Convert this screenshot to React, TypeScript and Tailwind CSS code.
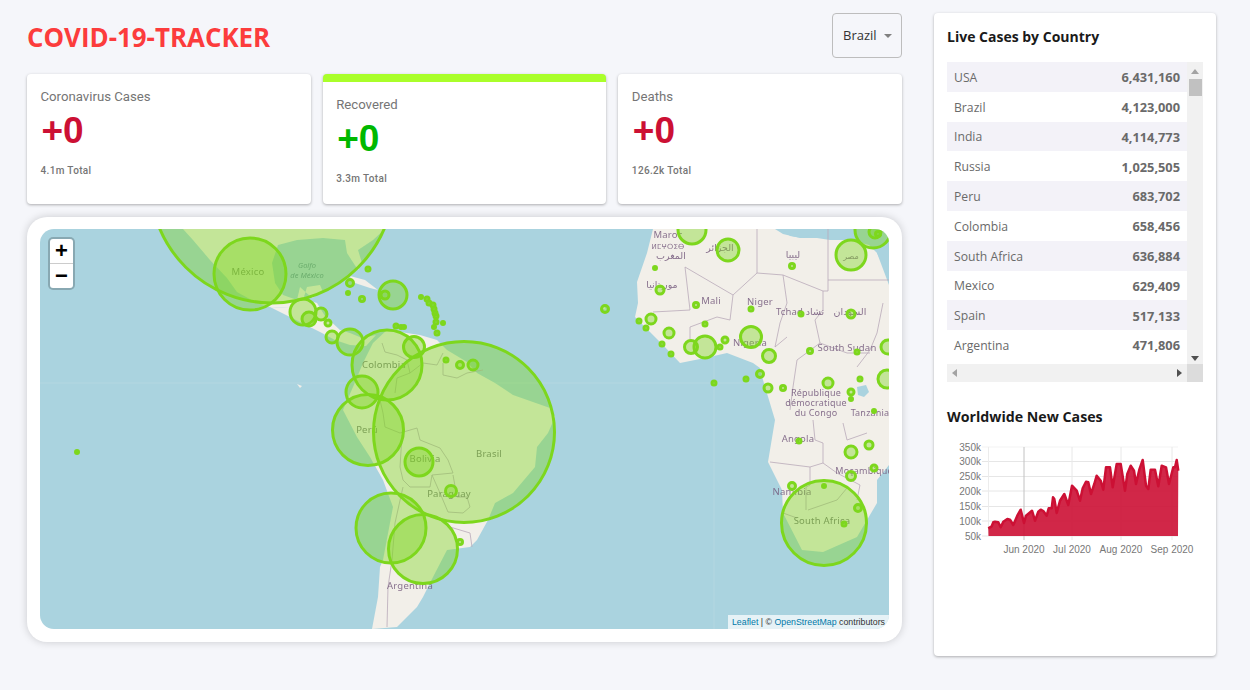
const countries = [
  ["USA", "6,431,160"],
  ["Brazil", "4,123,000"],
  ["India", "4,114,773"],
  ["Russia", "1,025,505"],
  ["Peru", "683,702"],
  ["Colombia", "658,456"],
  ["South Africa", "636,884"],
  ["Mexico", "629,409"],
  ["Spain", "517,133"],
  ["Argentina", "471,806"],
];

// x, y, r in page pixels; the svg viewBox below uses the same numbers
const bubbles: [number, number, number][] = [
  [272, 181, 122], [250, 274, 36], [368, 269, 2], [350, 283, 3.5], [348, 293, 1.5], [362, 299, 2.5],
  [393, 295, 14], [385, 295, 4], [421, 297, 1.5], [427, 299, 2], [429, 303, 2], [433, 305, 2],
  [434, 309, 2], [435, 313, 2], [436, 316, 2], [436, 322, 2], [443, 323, 1.5], [434, 327, 1.5],
  [437, 333, 2], [396, 326, 2], [401, 327, 1.5], [404, 327, 1.5], [303, 312, 13], [309, 319, 7],
  [321, 314, 6], [328, 323, 3], [332, 337, 6], [350, 342, 13], [387, 365, 35], [414, 347, 10.5],
  [446, 360, 2], [460, 365, 3.5], [473, 365, 5], [362, 392, 16], [368, 430, 35.5], [464, 432, 90.5],
  [419, 462, 14], [451, 491, 5.5], [391, 528, 35], [423, 549, 34.5], [460, 542, 2.5], [77, 452, 1.5],
  [605, 309, 3.5], [692, 230, 14], [728, 250, 11], [792, 266, 2.5], [851, 255, 15], [873, 230, 18],
  [878, 234, 2.5], [875, 232, 6], [655, 268, 1.5], [660, 290, 4], [696, 305, 2.5], [751, 309, 2],
  [801, 314, 2], [851, 314, 4], [651, 319, 5], [639, 321, 2], [646, 328, 2], [669, 333, 5],
  [705, 324, 2], [662, 344, 2], [671, 354, 2], [691, 347, 6.5], [705, 347, 11], [725, 340, 3],
  [720, 347, 2], [751, 337, 10.5], [769, 356, 6.5], [810, 351, 2.5], [857, 352, 2], [888, 347, 7],
  [760, 374, 3.5], [746, 379, 2], [714, 383, 2], [768, 388, 4], [783, 388, 2.5], [828, 383, 5],
  [851, 392, 3], [851, 399, 1.5], [860, 379, 2], [887, 379, 9], [874, 411, 1.5], [799, 441, 2],
  [851, 452, 6], [869, 445, 4], [874, 468, 3], [851, 476, 4.5], [792, 486, 3.5], [824, 486, 1.5],
  [858, 508, 3.5], [844, 524, 2], [824, 523, 42.5],
];

const land = [
  // usa and mexico
  "M183 229 L193 240 L210 260 L227 278 L237 292 L257 303 L270 307 L290 308 L297 302 L303 300 L307 287 L320 285 L323 292 L312 298 L300 287 L297 300 L283 295 L275 283 L272 263 L278 245 L297 240 L323 238 L345 240 L347 253 L358 270 L362 263 L358 250 L373 240 L385 229 Z",
  // central america
  "M270 307 L300 322 L320 332 L335 340 L350 345 L366 346 L376 335 L362 338 L350 333 L340 330 L325 316 L317 303 L303 299 L297 302 L290 308 Z",
  // south america
  "M387 330 L420 335 L437 340 L447 350 L467 362 L477 373 L495 383 L513 395 L550 408 L555 417 L548 433 L537 447 L535 467 L513 493 L495 503 L488 520 L477 540 L470 547 L447 550 L433 577 L423 597 L417 607 L397 627 L372 629 L378 597 L380 567 L383 560 L393 507 L383 480 L370 457 L357 437 L343 410 L353 387 L363 363 L373 343 Z",
  // africa
  "M653 229 L647 253 L637 282 L638 303 L635 317 L650 332 L663 345 L680 363 L705 358 L727 353 L753 363 L760 368 L763 380 L775 420 L768 462 L782 490 L783 513 L802 550 L823 552 L857 537 L877 503 L877 480 L889 465 L889 285 L877 253 L869 245 L850 240 L830 240 L817 238 L800 238 L783 234 L775 229 Z",
  // islands
  "M350 276 L365 280 L378 290 L370 288 L352 282 Z",
  "M297 384 L302 386 L300 388 Z",
  "M600 308 L604 305 L606 310 Z",
];

const borders = [
  "M382 343 L385 352 L397 355 L407 360 L410 373 L397 378 L395 393",
  "M410 373 L423 363 L437 365 L443 353",
  "M443 363 L443 375 L457 378 L467 373 L483 370",
  "M380 400 L383 413 L385 427 L400 433 L417 428",
  "M417 428 L420 440 L440 448 L448 460 L453 473 L432 475 L430 487 L410 487 L403 480 L400 467 L402 435",
  "M432 475 L440 493 L448 512 L463 513 L470 507 L467 497 L457 497 L453 475",
  "M403 487 L395 523 L392 560 L388 587 L387 627",
  "M450 527 L470 533 L472 547",
  "M685 267 L733 295 L757 273 L757 229",
  "M685 267 L690 310 L653 312",
  "M757 273 L783 275 L823 291 L828 291 L828 229",
  "M733 295 L730 320 L717 317 L690 327 L690 342",
  "M783 275 L787 303 L780 323 L775 347 L787 337",
  "M823 291 L823 310 L815 320 L820 343 L797 360 L793 387 L790 410",
  "M828 280 L889 280",
  "M883 303 L877 333 L870 350 L857 367",
  "M820 343 L847 353 L870 353",
  "M770 462 L810 467 L810 485 L806 487 L806 510",
  "M808 510 L837 500 L847 488",
  "M813 420 L815 440 L823 443 L823 463 L810 467",
  "M823 463 L837 473 L860 485 L857 500",
  "M843 423 L847 440 L867 433",
  "M783 513 L797 518",
];

const arrowUp = "M0 5 L4 0 L8 5 Z";

const chartPoints: [number, number][] = [
  [175, 388], [185, 382], [190, 370], [195, 368], [205, 370], [212, 385], [220, 368], [232, 360], [240, 362],
  [250, 378], [262, 350], [272, 332], [282, 372], [288, 350], [298, 342], [306, 335], [315, 365], [325, 338],
  [332, 332], [340, 336], [350, 350], [356, 328], [365, 328], [369, 295], [373, 300], [380, 342], [390, 305],
  [403, 285], [415, 318], [426, 260], [440, 275], [450, 305], [458, 268], [468, 248], [475, 250], [483, 285],
  [493, 255], [500, 230], [512, 245], [520, 272], [528, 205], [540, 205], [548, 265], [560, 195], [572, 195],
  [585, 275], [592, 225], [602, 200], [612, 215], [618, 255], [628, 212], [638, 183], [648, 260], [655, 270],
  [662, 212], [675, 212], [685, 262], [695, 200], [708, 205], [717, 255], [730, 205], [735, 205], [740, 183],
  [745, 215],
];
const chartLine = chartPoints.map(([x, y]) => `${(x / 3 + 930).toFixed(1)} ${(y / 3 + 400).toFixed(1)}`).join(" L");

function StatCard({ title, value, total, color, active }: { title: string; value: string; total: string; color: string; active?: boolean }) {
  return (
    <div className={`flex-1 h-[130px] rounded bg-white shadow-[0_1px_3px_rgba(0,0,0,0.3)] px-[13.5px] pt-[15px] overflow-hidden ${active ? "border-t-[8px] border-[#aaff2a]" : ""}`}>
      <p className="font-['Roboto',sans-serif] text-[13.2px] leading-[16px] text-[#757575]">{title}</p>
      <p className={`mt-[4px] ml-[1px] font-['Liberation_Sans',sans-serif] text-[37px] leading-[44px] font-bold ${color}`}>{value}</p>
      <p className="mt-[11px] font-['Roboto',sans-serif] text-[10px] leading-[14px] font-medium text-[#757575] tracking-[0.35px]">{total}</p>
    </div>
  );
}

function CountryTable() {
  return (
    <div className="mt-[14px] h-[320px] grid grid-cols-[240px_16px] grid-rows-[302px_18px] bg-[#f1f1f1]">
      <div className="bg-white">
        {countries.map(([name, cases], i) => (
          <div key={name} className={`flex items-center justify-between h-[29.8px] pt-[2px] px-[7px] text-[#6a6a6a] ${i % 2 === 0 ? "bg-[#f3f2f8]" : "bg-white"}`}>
            <span className="text-[12.2px]">{name}</span>
            <span className="text-[12.8px] font-bold">{cases}</span>
          </div>
        ))}
      </div>
      <div className="flex flex-col items-center bg-[#f1f1f1]">
        <svg viewBox="0 0 8 5" className="mt-[7px] w-2 h-[5px] fill-[#a3a3a3]"><path d={arrowUp} /></svg>
        <div className="mt-[5px] w-[13px] h-[17px] bg-[#c1c1c1]" />
        <svg viewBox="0 0 8 5" className="mt-auto mb-[3px] w-2 h-[5px] fill-[#505050] rotate-180"><path d={arrowUp} /></svg>
      </div>
      <div className="flex items-center justify-between px-[5px] bg-[#f1f1f1]">
        <svg viewBox="0 0 5 8" className="w-[5px] h-2 fill-[#a3a3a3]"><path d="M0 4 L5 0 L5 8 Z" /></svg>
        <svg viewBox="0 0 5 8" className="w-[5px] h-2 fill-[#505050]"><path d="M5 4 L0 0 L0 8 Z" /></svg>
      </div>
      <div className="bg-[#dcdcdc]" />
    </div>
  );
}

function CasesChart() {
  const ticks = [
    ["350k", 448], ["300k", 462.5], ["250k", 477.5], ["200k", 492], ["150k", 507.5], ["100k", 522], ["50k", 537],
  ] as const;
  const months = [
    ["Jun 2020", 1024, "#c2c2c2"], ["Jul 2020", 1072, "#e8e8e8"], ["Aug 2020", 1121, "#e8e8e8"], ["Sep 2020", 1172, "#e8e8e8"],
  ] as const;
  return (
    <svg viewBox="947 440 256 120" className="mt-[11px] block w-[256px] h-[120px] font-['Liberation_Sans',sans-serif]">
      {ticks.map(([label, y], i) => (
        <g key={label}>
          <line x1="982" x2="1178" y1={y} y2={y} stroke={i === 0 ? "#f3f3f3" : "#e6e6e6"} />
          <text x="981" y={y + 3.5} textAnchor="end" fontSize="10" fill="#777">{label}</text>
        </g>
      ))}
      <line x1="988.5" x2="988.5" y1="448" y2="537" stroke="#ececec" />
      {months.map(([label, x, stroke]) => (
        <g key={label}>
          <line x1={x} x2={x} y1="448" y2="541" stroke={stroke} />
          <text x={x} y="554" textAnchor="middle" fontSize="10" fill="#777">{label}</text>
        </g>
      ))}
      <path d={`M988.5 537 L${chartLine} L1178 537 Z`} fill="#cc1034" fillOpacity="0.9" />
      <path d={`M${chartLine}`} fill="none" stroke="#cc1034" strokeWidth="2.5" strokeLinejoin="round" />
    </svg>
  );
}

function MapLabel({ x, y, children, purple, size = 9.5 }: { x: number; y: number; children: string; purple?: boolean; size?: number }) {
  return (
    <text x={x} y={y} textAnchor="middle" fontSize={size} fill={purple ? "#74597c" : "#666"} fillOpacity="0.85" letterSpacing="0.2">
      {children}
    </text>
  );
}

function WorldMap() {
  return (
    <div className="relative h-[400px] rounded-[14px] overflow-hidden bg-[#aad3df]">
      <svg viewBox="40 229 849 400" className="block w-[849px] h-[400px] blur-[0.35px] font-['Noto_Sans','DejaVu_Sans',sans-serif]">
        <line x1="40" x2="889" y1="383" y2="383" stroke="#fff" strokeOpacity="0.12" />
        <line x1="714" x2="714" y1="229" y2="629" stroke="#fff" strokeOpacity="0.12" />
        {land.map((d) => (
          <path key={d} d={d} fill="#f2efe9" />
        ))}
        <path d="M857 387 L866 385 L869 392 L864 397 L858 395 Z" fill="#aad3df" />
        <path d="M877 253 L885 270 L889 280 L889 262 L882 253 Z" fill="#aad3df" />
        <path d="M783 229 L790 236 L803 238 L812 234 L817 229 Z" fill="#aad3df" />
        <path d="M377 329 L381 333 L379 337 L376 334 Z" fill="#aad3df" />
        {borders.map((d) => (
          <path key={d} d={d} fill="none" stroke="#b9a9b9" strokeWidth="0.8" />
        ))}
        <MapLabel x={248} y={275}>México</MapLabel>
        <text x={307} y={268} textAnchor="middle" fontSize="7.5" fontStyle="italic" fill="#5f8fa0">Golfo</text>
        <text x={307} y={278} textAnchor="middle" fontSize="7.5" fontStyle="italic" fill="#5f8fa0">de México</text>
        <MapLabel x={384} y={368}>Colombia</MapLabel>
        <MapLabel x={367} y={433}>Perú</MapLabel>
        <MapLabel x={489} y={457}>Brasil</MapLabel>
        <MapLabel x={425} y={462}>Bolivia</MapLabel>
        <MapLabel x={449} y={497}>Paraguay</MapLabel>
        <MapLabel x={410} y={589} purple>Argentina</MapLabel>
        <MapLabel x={668} y={238} purple>Maroc</MapLabel>
        <MapLabel x={668} y={249} size={7} purple>ⵍⵎⵖⵔⵉⴱ</MapLabel>
        <MapLabel x={671} y={259} purple>المغرب</MapLabel>
        <MapLabel x={720} y={251} purple>الجزائر</MapLabel>
        <MapLabel x={793} y={258} purple>ليبيا</MapLabel>
        <MapLabel x={851} y={259} size={8} purple>مصر</MapLabel>
        <MapLabel x={662} y={288} purple>موريتانيا</MapLabel>
        <MapLabel x={711} y={304} purple>Mali</MapLabel>
        <MapLabel x={760} y={305} purple>Niger</MapLabel>
        <MapLabel x={800} y={315} purple>Tchad تشاد</MapLabel>
        <MapLabel x={850} y={315} purple>السودان</MapLabel>
        <MapLabel x={750} y={346} purple>Nigeria</MapLabel>
        <MapLabel x={847} y={351} purple>South Sudan</MapLabel>
        <MapLabel x={816} y={396} size={9} purple>République</MapLabel>
        <MapLabel x={816} y={406} size={9} purple>démocratique</MapLabel>
        <MapLabel x={816} y={416} size={9} purple>du Congo</MapLabel>
        <MapLabel x={870} y={416} size={9} purple>Tanzania</MapLabel>
        <MapLabel x={798} y={442} purple>Angola</MapLabel>
        <MapLabel x={864} y={474} size={9} purple>Moçambique</MapLabel>
        <MapLabel x={792} y={495} purple>Namibia</MapLabel>
        <MapLabel x={822} y={524}>South Africa</MapLabel>
        {bubbles.map(([x, y, r]) => (
          <circle key={`${x}-${y}-${r}`} cx={x} cy={y} r={r} fill="#7dd71d" fillOpacity="0.4" stroke="#7dd71d" strokeWidth="3" />
        ))}
      </svg>

      <div className="absolute left-[10px] top-[10px] w-[23px] rounded-[3px] shadow-[0_0_0_2px_rgba(0,0,0,0.2)] bg-white overflow-hidden font-['Liberation_Sans',sans-serif] text-[22px] leading-[24px] font-bold text-black text-center">
        <div className="h-[25px] border-b border-[#ccc]">+</div>
        <div className="h-[24px]">−</div>
      </div>

      <div className="absolute right-0 bottom-0 h-[14px] pl-[4px] pr-[4px] bg-white/70 font-['Liberation_Sans',sans-serif] text-[8.8px] leading-[14px] text-[#333]">
        <span className="text-[#0078a8]">Leaflet</span> | © <span className="text-[#0078a8]">OpenStreetMap</span> contributors
      </div>
    </div>
  );
}

export default function App() {
  return (
    <div className="min-h-[690px] bg-[#f5f6fa] flex pl-[27px] pt-[13px] font-['Open_Sans',sans-serif]">
      <div className="w-[875px]">
        <div className="flex items-center justify-between h-[45px]">
          <h1 className="pt-[4px] text-[25.9px] font-bold text-[#fc3c3c]">COVID-19-TRACKER</h1>
          <div className="flex items-center h-[45px] w-[70px] pl-[10px] rounded border border-[#bdbdbd] text-[13px] text-[#333]">
            Brazil
            <span className="ml-[7px] border-x-[4px] border-t-[4.5px] border-x-transparent border-t-[#808080]" />
          </div>
        </div>

        <div className="mt-[16px] flex gap-[12px]">
          <StatCard title="Coronavirus Cases" value="+0" total="4.1m Total" color="text-[#cc1034]" />
          <StatCard title="Recovered" value="+0" total="3.3m Total" color="text-[#00b800]" active />
          <StatCard title="Deaths" value="+0" total="126.2k Total" color="text-[#cc1034]" />
        </div>

        <div className="mt-[13px] h-[425px] rounded-[20px] bg-white px-[13px] pt-[12px] pb-[13px] shadow-[0_0_8px_rgba(0,0,0,0.18)]">
          <WorldMap />
        </div>
      </div>

      <aside className="ml-[32px] w-[282px] h-[643px] rounded bg-white px-[13px] pt-[13px] shadow-[0_1px_3px_rgba(0,0,0,0.3)]">
        <h3 className="text-[14px] leading-[22px] font-bold text-[#1a1a1a]">Live Cases by Country</h3>
        <CountryTable />
        <h3 className="mt-[24px] text-[14.2px] leading-[22px] font-bold text-[#1a1a1a]">Worldwide New Cases</h3>
        <CasesChart />
      </aside>
    </div>
  );
}
